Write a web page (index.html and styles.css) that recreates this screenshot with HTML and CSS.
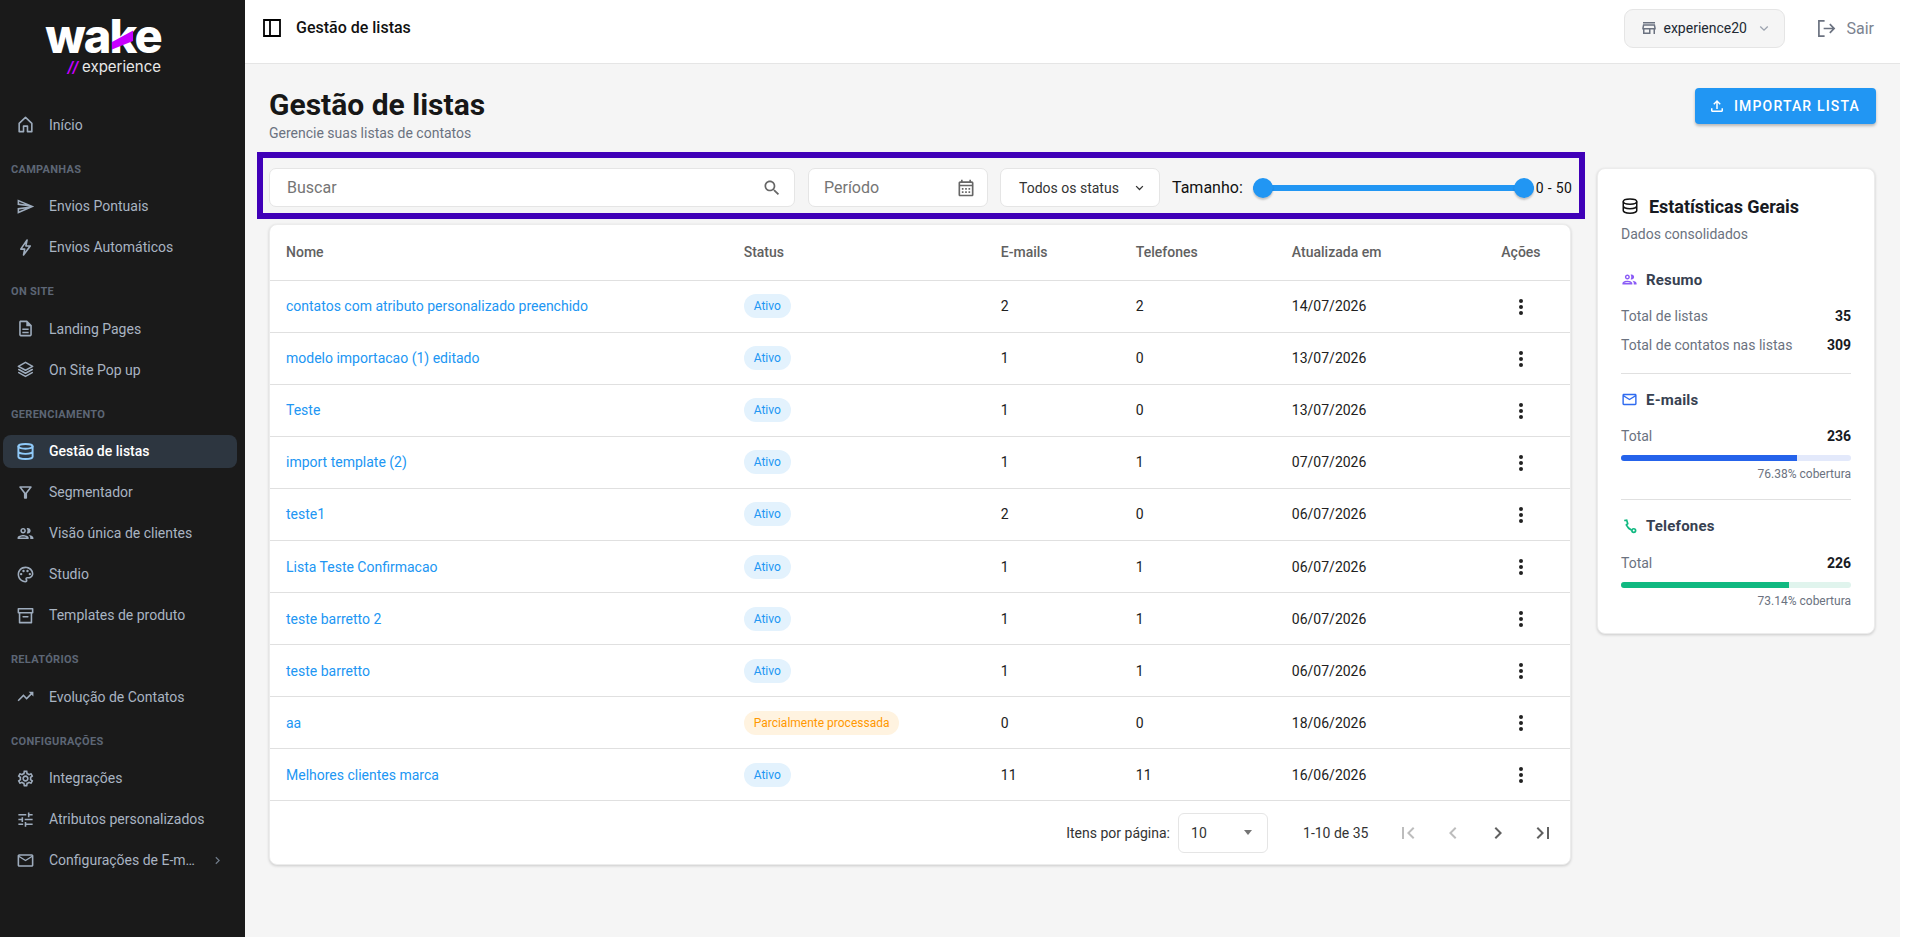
FILE: index.html
```html
<!DOCTYPE html>
<html lang="pt-BR">
<head>
<meta charset="utf-8">
<title>Gestão de listas</title>
<link rel="stylesheet" href="styles.css">
</head>
<body>
<div class="app">
  <aside class="sidebar">
    <div class="logo">
      <div class="logo-word">wake<svg class="logo-slash" viewBox="0 0 24 20"><polygon points="0,12 22,0 22,11 0,20"/></svg></div>
      <div class="logo-sub"><em>//</em> experience</div>
    </div>
    <nav class="nav">
      <a class="nav-item"><svg class="ic" viewBox="0 0 24 24"><path class="st" d="M4 21V10.5L12 3l8 7.500V21h-5.500v-7h-5v7z"/></svg><span>Início</span></a>
      <div class="nav-label">CAMPANHAS</div>
      <a class="nav-item"><svg class="ic" viewBox="0 0 24 24"><path d="M4.010 6.030l7.510 3.220-7.520-1 .01-2.220m7.500 8.720L4 17.970v-2.220l7.510-1M2.010 3L2 10l15 2-15 2 .01 7L23 12 2.010 3z"/></svg><span>Envios Pontuais</span></a>
      <a class="nav-item"><svg class="ic" viewBox="0 0 24 24"><path class="st" d="M14 2.500 6 14h5l-1.500 7.500L18 10h-5.500z"/></svg><span>Envios Automáticos</span></a>
      <div class="nav-label">ON SITE</div>
      <a class="nav-item"><svg class="ic" viewBox="0 0 24 24"><path d="M8 16h8v2H8zm0-4h8v2H8zm6-10H6c-1.100 0-2 .9-2 2v16c0 1.100.89 2 1.990 2H18c1.100 0 2-.9 2-2V8l-6-6zm4 18H6V4h7v5h5v11z"/></svg><span>Landing Pages</span></a>
      <a class="nav-item"><svg class="ic" viewBox="0 0 24 24"><path class="st" d="M12 3l9 5-9 5-9-5zM3.500 12l8.500 4.700 8.500-4.700M3.500 16l8.500 4.700 8.500-4.700"/></svg><span>On Site Pop up</span></a>
      <div class="nav-label">GERENCIAMENTO</div>
      <a class="nav-item active"><svg class="ic" viewBox="0 0 24 24"><g class="st thick"><ellipse cx="12" cy="5.500" rx="9" ry="3"/><path d="M3 5.500v13c0 1.700 4 3 9 3s9-1.300 9-3v-13M3 12c0 1.700 4 3 9 3s9-1.300 9-3"/></g></svg><span>Gestão de listas</span></a>
      <a class="nav-item"><svg class="ic" viewBox="0 0 24 24"><path d="M7 6h10l-5.010 6.300L7 6zM4.250 5.610C6.270 8.200 10 13 10 13v6c0 .55.45 1 1 1h2c.55 0 1-.45 1-1v-6s3.720-4.800 5.740-7.390C20.250 4.950 19.780 4 18.950 4H5.040C4.210 4 3.740 4.950 4.250 5.610z"/></svg><span>Segmentador</span></a>
      <a class="nav-item"><svg class="ic" viewBox="0 0 24 24"><path d="M9 13.750c-2.340 0-7 1.170-7 3.500V19h14v-1.750c0-2.330-4.660-3.500-7-3.500zM4.340 17c.84-.58 2.870-1.250 4.660-1.250s3.820.67 4.660 1.250H4.340zM9 12c1.930 0 3.500-1.570 3.500-3.500S10.930 5 9 5 5.500 6.570 5.500 8.500 7.070 12 9 12zm0-5c.83 0 1.500.67 1.500 1.500S9.830 10 9 10s-1.500-.67-1.500-1.500S8.170 7 9 7zm7.040 6.810c1.160.84 1.960 1.960 1.960 3.440V19h4v-1.750c0-2.020-3.500-3.170-5.960-3.440zM15 12c1.930 0 3.500-1.570 3.500-3.500S16.930 5 15 5c-.54 0-1.040.13-1.500.35.63.89 1 1.980 1 3.150s-.37 2.260-1 3.150c.46.22.96.35 1.500.35z"/></svg><span>Visão única de clientes</span></a>
      <a class="nav-item"><svg class="ic" viewBox="0 0 24 24"><path d="M12 22C6.490 22 2 17.510 2 12S6.490 2 12 2s10 4.040 10 9c0 3.310-2.690 6-6 6h-1.770c-.28 0-.5.22-.5.5 0 .12.05.23.13.33.41.47.64 1.060.64 1.670 0 1.380-1.120 2.500-2.500 2.500zm0-18c-4.410 0-8 3.590-8 8s3.590 8 8 8c.28 0 .5-.22.5-.5 0-.16-.08-.28-.14-.35-.41-.46-.63-1.050-.63-1.650 0-1.380 1.120-2.500 2.500-2.500H16c2.210 0 4-1.790 4-4 0-3.860-3.590-7-8-7z"/><circle cx="6.500" cy="11.500" r="1.500"/><circle cx="9.500" cy="7.500" r="1.500"/><circle cx="14.500" cy="7.500" r="1.500"/><circle cx="17.500" cy="11.500" r="1.500"/></svg><span>Studio</span></a>
      <a class="nav-item"><svg class="ic" viewBox="0 0 24 24"><path class="st" d="M3 3.500h18v5H3zM4.500 8.500V21h15V8.500M9 13.500h6"/></svg><span>Templates de produto</span></a>
      <div class="nav-label">RELATÓRIOS</div>
      <a class="nav-item"><svg class="ic" viewBox="0 0 24 24"><path d="M16 6l2.290 2.290-4.880 4.880-4-4L2 16.590 3.410 18l6-6 4 4 6.300-6.290L22 12V6z"/></svg><span>Evolução de Contatos</span></a>
      <div class="nav-label">CONFIGURAÇÕES</div>
      <a class="nav-item"><svg class="ic" viewBox="0 0 24 24"><path d="M19.430 12.980c.04-.32.07-.64.07-.98 0-.34-.03-.66-.07-.98l2.110-1.650c.19-.15.24-.42.12-.64l-2-3.460c-.09-.16-.26-.25-.44-.25-.06 0-.12.01-.17.03l-2.490 1c-.52-.4-1.080-.73-1.690-.98l-.38-2.650C14.460 2.180 14.250 2 14 2h-4c-.25 0-.46.18-.49.42l-.38 2.650c-.61.25-1.170.59-1.690.98l-2.490-1c-.06-.02-.12-.03-.18-.03-.17 0-.34.09-.43.25l-2 3.460c-.13.22-.07.49.12.64l2.110 1.650c-.04.32-.07.65-.07.98 0 .33.03.66.07.98l-2.110 1.650c-.19.15-.24.42-.12.64l2 3.460c.09.16.26.25.44.25.06 0 .12-.01.17-.03l2.490-1c.52.4 1.080.73 1.690.98l.38 2.650c.03.24.24.42.49.42h4c.25 0 .46-.18.49-.42l.38-2.650c.61-.25 1.170-.59 1.690-.98l2.490 1c.06.02.12.03.18.03.17 0 .34-.09.43-.25l2-3.460c.12-.22.07-.49-.12-.64l-2.110-1.650zm-1.980-1.710c.04.31.05.52.05.73 0 .21-.02.43-.05.73l-.14 1.130.89.7 1.080.84-.7 1.210-1.270-.51-1.040-.42-.9.68c-.43.32-.84.56-1.250.73l-1.060.43-.16 1.130-.2 1.350h-1.400l-.19-1.350-.16-1.130-1.060-.43c-.43-.18-.83-.41-1.230-.71l-.91-.7-1.060.43-1.270.51-.7-1.210 1.080-.84.89-.7-.14-1.130c-.03-.31-.05-.54-.05-.74s.02-.43.05-.73l.14-1.130-.89-.7-1.080-.84.7-1.210 1.270.51 1.040.42.9-.68c.43-.32.84-.56 1.250-.73l1.060-.43.16-1.130.2-1.350h1.390l.19 1.350.16 1.130 1.060.43c.43.18.83.41 1.230.71l.91.7 1.060-.43 1.270-.51.7 1.210-1.070.85-.89.7.14 1.130zM12 8c-2.210 0-4 1.790-4 4s1.790 4 4 4 4-1.790 4-4-1.790-4-4-4zm0 6c-1.100 0-2-.9-2-2s.9-2 2-2 2 .9 2 2-.9 2-2 2z"/></svg><span>Integrações</span></a>
      <a class="nav-item"><svg class="ic" viewBox="0 0 24 24"><path d="M3 17v2h6v-2H3zM3 5v2h10V5H3zm10 16v-2h8v-2h-8v-2h-2v6h2zM7 9v2H3v2h4v2h2V9H7zm14 4v-2H11v2h10zm-6-4h2V7h4V5h-4V3h-2v6z"/></svg><span>Atributos personalizados</span></a>
      <a class="nav-item"><svg class="ic" viewBox="0 0 24 24"><path d="M22 6c0-1.100-.9-2-2-2H4c-1.100 0-2 .9-2 2v12c0 1.100.9 2 2 2h16c1.100 0 2-.9 2-2V6zm-2 0l-8 5-8-5h16zm0 12H4V8l8 5 8-5v10z"/></svg><span class="nav-trunc">Configurações de E-m…</span><svg class="nav-chev" viewBox="0 0 24 24"><path d="M10 6 8.590 7.410 13.170 12l-4.580 4.590L10 18l6-6z"/></svg></a>
    </nav>
  </aside>
  <div class="main">
    <header class="topbar">
      <svg class="panel-ic" viewBox="0 0 18 18"><path d="M1 1h16v16H1zM7 1v16"/></svg>
      <div class="topbar-title">Gestão de listas</div>
      <div class="store">
        <svg class="store-ic" viewBox="0 0 24 24"><path d="M18.360 9l.6 3H5.040l.6-3h12.720M20 4H4v2h16V4zm0 3H4l-1 5v2h1v6h10v-6h4v6h2v-6h1v-2l-1-5zM6 18v-4h6v4H6z"/></svg>
        <span class="store-name">experience20</span>
        <svg class="store-chev" viewBox="0 0 12 8"><path d="M1.500 1.500 6 6l4.500-4.500"/></svg>
      </div>
      <div class="logout">
        <svg class="logout-ic" viewBox="0 0 20 20"><path d="M8 2H2v16h6M7 10h11M13.500 5.500 18 10l-4.500 4.500"/></svg>
        <span>Sair</span>
      </div>
    </header>
    <main class="content">
      <div class="page-head">
        <div>
          <h1 class="page-title">Gestão de listas</h1>
          <p class="page-sub">Gerencie suas listas de contatos</p>
        </div>
        <button class="import-btn"><svg viewBox="0 0 24 24"><path d="M18 15v3H6v-3H4v3c0 1.100.9 2 2 2h12c1.100 0 2-.9 2-2v-3h-2zM7 9l1.410 1.410L11 7.830V16h2V7.830l2.590 2.580L17 9l-5-5-5 5z"/></svg>IMPORTAR LISTA</button>
      </div>
      <div class="columns">
        <section class="left">
          <div class="toolbar">
            <div class="field search"><span>Buscar</span><svg viewBox="0 0 24 24"><path d="M15.500 14h-.79l-.28-.27C15.410 12.590 16 11.110 16 9.500 16 5.910 13.090 3 9.500 3S3 5.910 3 9.500 5.910 16 9.500 16c1.610 0 3.090-.59 4.230-1.570l.27.28v.79l5 4.990L20.490 19l-4.990-5zm-6 0C7.010 14 5 11.990 5 9.500S7.010 5 9.500 5 14 7.010 14 9.500 11.990 14 9.500 14z"/></svg></div>
            <div class="field period"><span>Período</span><svg viewBox="0 0 24 24"><path d="M19 4h-1V2h-2v2H8V2H6v2H5c-1.110 0-1.990.9-1.990 2L3 20c0 1.100.89 2 2 2h14c1.100 0 2-.9 2-2V6c0-1.100-.9-2-2-2zm0 16H5V10h14v10zm0-12H5V6h14v2zM9 14H7v-2h2v2zm4 0h-2v-2h2v2zm4 0h-2v-2h2v2zm-8 4H7v-2h2v2zm4 0h-2v-2h2v2zm4 0h-2v-2h2v2z"/></svg></div>
            <div class="field status-filter"><span>Todos os status</span><svg viewBox="0 0 12 8"><path d="M1.500 1.500 6 6l4.500-4.500"/></svg></div>
            <span class="size-label">Tamanho:</span>
            <div class="slider"><i class="thumb"></i><i class="thumb"></i></div>
            <span class="size-value">0 - 50</span>
          </div>
          <div class="table-card">
            <table class="table">
              <colgroup><col class="c-name"><col class="c-status"><col class="c-mail"><col class="c-phone"><col class="c-date"><col class="c-act"></colgroup>
              <thead><tr><th>Nome</th><th>Status</th><th>E-mails</th><th>Telefones</th><th>Atualizada em</th><th class="act">Ações</th></tr></thead>
              <tbody>
                <tr><td><a>contatos com atributo personalizado preenchido</a></td><td><span class="chip">Ativo</span></td><td>2</td><td>2</td><td>14/07/2026</td><td class="act"><svg class="kebab" viewBox="0 0 24 24"><circle cx="12" cy="6" r="2"/><circle cx="12" cy="12" r="2"/><circle cx="12" cy="18" r="2"/></svg></td></tr>
                <tr><td><a>modelo importacao (1) editado</a></td><td><span class="chip">Ativo</span></td><td>1</td><td>0</td><td>13/07/2026</td><td class="act"><svg class="kebab" viewBox="0 0 24 24"><circle cx="12" cy="6" r="2"/><circle cx="12" cy="12" r="2"/><circle cx="12" cy="18" r="2"/></svg></td></tr>
                <tr><td><a>Teste</a></td><td><span class="chip">Ativo</span></td><td>1</td><td>0</td><td>13/07/2026</td><td class="act"><svg class="kebab" viewBox="0 0 24 24"><circle cx="12" cy="6" r="2"/><circle cx="12" cy="12" r="2"/><circle cx="12" cy="18" r="2"/></svg></td></tr>
                <tr><td><a>import template (2)</a></td><td><span class="chip">Ativo</span></td><td>1</td><td>1</td><td>07/07/2026</td><td class="act"><svg class="kebab" viewBox="0 0 24 24"><circle cx="12" cy="6" r="2"/><circle cx="12" cy="12" r="2"/><circle cx="12" cy="18" r="2"/></svg></td></tr>
                <tr><td><a>teste1</a></td><td><span class="chip">Ativo</span></td><td>2</td><td>0</td><td>06/07/2026</td><td class="act"><svg class="kebab" viewBox="0 0 24 24"><circle cx="12" cy="6" r="2"/><circle cx="12" cy="12" r="2"/><circle cx="12" cy="18" r="2"/></svg></td></tr>
                <tr><td><a>Lista Teste Confirmacao</a></td><td><span class="chip">Ativo</span></td><td>1</td><td>1</td><td>06/07/2026</td><td class="act"><svg class="kebab" viewBox="0 0 24 24"><circle cx="12" cy="6" r="2"/><circle cx="12" cy="12" r="2"/><circle cx="12" cy="18" r="2"/></svg></td></tr>
                <tr><td><a>teste barretto 2</a></td><td><span class="chip">Ativo</span></td><td>1</td><td>1</td><td>06/07/2026</td><td class="act"><svg class="kebab" viewBox="0 0 24 24"><circle cx="12" cy="6" r="2"/><circle cx="12" cy="12" r="2"/><circle cx="12" cy="18" r="2"/></svg></td></tr>
                <tr><td><a>teste barretto</a></td><td><span class="chip">Ativo</span></td><td>1</td><td>1</td><td>06/07/2026</td><td class="act"><svg class="kebab" viewBox="0 0 24 24"><circle cx="12" cy="6" r="2"/><circle cx="12" cy="12" r="2"/><circle cx="12" cy="18" r="2"/></svg></td></tr>
                <tr><td><a>aa</a></td><td><span class="chip partial">Parcialmente processada</span></td><td>0</td><td>0</td><td>18/06/2026</td><td class="act"><svg class="kebab" viewBox="0 0 24 24"><circle cx="12" cy="6" r="2"/><circle cx="12" cy="12" r="2"/><circle cx="12" cy="18" r="2"/></svg></td></tr>
                <tr><td><a>Melhores clientes marca</a></td><td><span class="chip">Ativo</span></td><td>11</td><td>11</td><td>16/06/2026</td><td class="act"><svg class="kebab" viewBox="0 0 24 24"><circle cx="12" cy="6" r="2"/><circle cx="12" cy="12" r="2"/><circle cx="12" cy="18" r="2"/></svg></td></tr>
              </tbody>
            </table>
            <div class="pager">
              <span>Itens por página:</span>
              <div class="pager-select"><span>10</span><i class="caret"></i></div>
              <span class="pager-range">1-10 de 35</span>
              <svg class="pg off" viewBox="0 0 24 24"><path d="M18.410 16.590 13.820 12l4.590-4.590L17 6l-6 6 6 6zM6 6h2v12H6z"/></svg>
              <svg class="pg off" viewBox="0 0 24 24"><path d="M15.410 7.410 14 6l-6 6 6 6 1.410-1.410L10.830 12z"/></svg>
              <svg class="pg" viewBox="0 0 24 24"><path d="M10 6 8.590 7.410 13.170 12l-4.580 4.590L10 18l6-6z"/></svg>
              <svg class="pg" viewBox="0 0 24 24"><path d="M5.590 7.410 10.180 12l-4.590 4.590L7 18l6-6-6-6zM16 6h2v12h-2z"/></svg>
            </div>
          </div>
        </section>
        <aside class="stats">
          <div class="stats-head">
            <svg class="stats-ic" viewBox="0 0 24 24"><ellipse cx="12" cy="6" rx="9" ry="3.500"/><path d="M3 6v12c0 1.900 4 3.500 9 3.500s9-1.600 9-3.500V6M3 12c0 1.900 4 3.500 9 3.500s9-1.600 9-3.500"/></svg>
            <h2>Estatísticas Gerais</h2>
          </div>
          <p class="stats-sub">Dados consolidados</p>
          <div class="stat-block first">
            <div class="stat-title"><svg class="violet" viewBox="0 0 24 24"><path d="M9 13.750c-2.340 0-7 1.170-7 3.500V19h14v-1.750c0-2.330-4.660-3.500-7-3.500zM4.340 17c.84-.58 2.870-1.250 4.660-1.250s3.820.67 4.660 1.250H4.340zM9 12c1.930 0 3.500-1.570 3.500-3.500S10.930 5 9 5 5.500 6.570 5.500 8.500 7.070 12 9 12zm0-5c.83 0 1.500.67 1.500 1.500S9.830 10 9 10s-1.500-.67-1.500-1.500S8.170 7 9 7zm7.040 6.810c1.160.84 1.960 1.960 1.960 3.440V19h4v-1.750c0-2.020-3.500-3.170-5.960-3.440zM15 12c1.930 0 3.500-1.570 3.500-3.500S16.930 5 15 5c-.54 0-1.040.13-1.500.35.63.89 1 1.980 1 3.150s-.37 2.260-1 3.150c.46.22.96.35 1.500.35z"/></svg>Resumo</div>
            <div class="stat-row"><span>Total de listas</span><b>35</b></div>
            <div class="stat-row"><span>Total de contatos nas listas</span><b>309</b></div>
          </div>
          <div class="stat-block">
            <div class="stat-title"><svg class="blue" viewBox="0 0 24 24"><path d="M22 6c0-1.100-.9-2-2-2H4c-1.100 0-2 .9-2 2v12c0 1.100.9 2 2 2h16c1.100 0 2-.9 2-2V6zm-2 0l-8 5-8-5h16zm0 12H4V8l8 5 8-5v10z"/></svg>E-mails</div>
            <div class="stat-row"><span>Total</span><b>236</b></div>
            <div class="bar blue-bar"><i style="width:76.38%"></i></div>
            <div class="bar-note">76.38% cobertura</div>
          </div>
          <div class="stat-block">
            <div class="stat-title"><svg class="green" viewBox="0 0 24 24"><path d="M4.500 3.500 8 3l1.500 5-2 1.800c1.500 3.400 4 6 7.500 7.400"/><circle cx="18" cy="17.800" r="2.600"/></svg>Telefones</div>
            <div class="stat-row"><span>Total</span><b>226</b></div>
            <div class="bar green-bar"><i style="width:73.14%"></i></div>
            <div class="bar-note">73.14% cobertura</div>
          </div>
        </aside>
      </div>
    </main>
  </div>
</div>
</body>
</html>
```
FILE: styles.css
```css
* { box-sizing: border-box; }
html, body { height: 100%; }
body { margin: 0; background: #fff; font-family: Roboto, "Liberation Sans", sans-serif; color: #212121; overflow: hidden; }
.app { display: flex; width: 1900px; height: 937px; }

.sidebar { flex: 0 0 245px; background: #1a1a1a; display: flex; flex-direction: column; }
.logo { height: 89px; display: flex; flex-direction: column; align-items: flex-end; padding: 14px 84px 0 0; }
.logo-word { position: relative; font-family: Inter, sans-serif; font-weight: 800; font-size: 47px; line-height: 44px; letter-spacing: -1.8px; color: #fff; }
.logo-slash { position: absolute; left: 67px; top: 16px; width: 23px; height: 20px; fill: #c800ff; }
.logo-sub { font-family: Inter, sans-serif; font-size: 15px; line-height: 18px; color: #e8e8e8; }
.logo-sub em { color: #c800ff; font-weight: 600; letter-spacing: -.5px; }
.nav { display: flex; flex-direction: column; padding: 0 8px 0 3px; margin-top: 19px; }
.nav-item { display: flex; align-items: center; height: 33px; margin-bottom: 8px; padding: 0 8px 0 14px; border-radius: 8px; font-size: 14px; color: #a9b4c2; }
.nav-item .ic { flex: none; width: 19px; height: 19px; margin-right: 14px; margin-left: -1px; fill: #9eacbd; }
.nav-item span { white-space: nowrap; }
.nav-item.active { background: #2d3640; color: #fff; font-weight: 500; }
.nav-item.active .ic { fill: none; }
.st { fill: none; stroke: #9eacbd; stroke-width: 2; stroke-linejoin: round; stroke-linecap: round; }
.st.thick { stroke: #90caf9; stroke-width: 2.4; }
.nav-label { font-size: 11px; font-weight: 700; letter-spacing: .3px; line-height: 14px; color: #5d6675; padding-left: 8px; margin: 13.500px 0 13px; }
.nav-trunc { width: 147px; }
.nav-chev { width: 15px; height: 15px; margin-left: 14px; fill: #6f7a88; }

.main { flex: 1; min-width: 0; background: #f5f5f5; display: flex; flex-direction: column; }
.topbar { height: 64px; background: #fff; border-bottom: 1px solid #e5e5e5; display: flex; align-items: center; padding: 0 26px 7px 18px; }
.panel-ic { width: 18px; height: 18px; fill: none; stroke: #000; stroke-width: 1.8; margin-right: 15px; }
.topbar-title { flex: 1; font-size: 16px; font-weight: 500; color: #111; margin-top: -1px; }
.store { display: flex; align-items: center; height: 39px; width: 161px; background: #f5f5f5; border: 1px solid #e5e5e5; border-radius: 9px; padding: 0 15px; margin-right: 32px; font-size: 14px; color: #212933; }
.store-ic { width: 18px; height: 18px; fill: #6b7280; margin-right: 5px; }
.store-name { flex: 1; }
.store-chev { width: 10px; height: 7px; fill: none; stroke: #9ca3af; stroke-width: 1.6; }
.logout { display: flex; align-items: center; font-size: 16px; color: #7b8390; }
.logout-ic { width: 19px; height: 19px; fill: none; stroke: #6b7280; stroke-width: 1.8; margin-right: 10px; }

.content { flex: 1; padding: 24px 24px 0; }
.page-head { display: flex; justify-content: space-between; height: 64px; }
.page-title { margin: -1px 0 0; font-size: 30px; line-height: 36px; font-weight: 700; color: #171717; }
.page-sub { margin: 1px 0 0; font-size: 14px; line-height: 18px; color: #6b7280; }
.import-btn { display: flex; align-items: center; height: 36px; width: 181px; padding: 0 0 0 13px; border: 0; border-radius: 4px; background: #2196f3; color: #fff; font: 500 14px Roboto, sans-serif; letter-spacing: 1.15px; box-shadow: 0 2px 3px rgba(0,0,0,.25); }
.import-btn svg { width: 18px; height: 18px; fill: #fff; margin-right: 8px; }

.columns { display: flex; gap: 12px; margin-left: -12px; align-items: flex-start; }
.left { width: 1328px; flex: none; }
.toolbar { display: flex; align-items: center; height: 67px; border: 6px solid #4000b8; padding: 4px 0 0 6px; }
.field { flex: none; display: flex; align-items: center; justify-content: space-between; height: 39px; background: #fff; border: 1px solid #e5e5e5; border-radius: 7px; font-size: 16px; color: #757575; }
.field svg { flex: none; }
.search { width: 526px; margin-right: 13px; padding: 0 12px 0 17px; }
.search svg { width: 20px; height: 20px; fill: #666; }
.period { width: 180px; margin-right: 12px; padding: 0 11px 0 15px; }
.period svg { width: 20px; height: 20px; fill: #666; }
.status-filter { width: 160px; margin-right: 12px; padding: 0 15px 0 18px; font-size: 14px; color: #333; }
.status-filter svg { width: 9px; height: 6px; fill: none; stroke: #333; stroke-width: 1.7; }
.size-label { font-size: 16px; color: #111; margin-right: 10px; }
.slider { flex: none; width: 281px; height: 6px; background: #2196f3; border-radius: 3px; margin-right: 2px; display: flex; justify-content: space-between; align-items: center; }
.thumb { display: block; width: 20px; height: 20px; border-radius: 50%; background: #2196f3; box-shadow: 0 2px 2px rgba(0,0,0,.2); }
.size-value { font-size: 14px; letter-spacing: .35px; color: #111; white-space: nowrap; }

.table-card { margin: 5px 14px 0 12px; background: #fff; border: 1px solid #ececec; border-radius: 8px; box-shadow: 0 1px 3px rgba(0,0,0,.18); overflow: hidden; }
.table { width: 100%; border-collapse: collapse; table-layout: fixed; font-size: 14px; }
.c-name { width: 457.5px; } .c-status { width: 257px; } .c-mail { width: 135px; } .c-phone { width: 156px; } .c-date { width: 196px; } .c-act { width: 98px; }
.table th { height: 55px; padding: 0 0 0 16px; text-align: left; font-weight: 500; font-size: 14px; color: #616161; border-bottom: 1px solid #e0e0e0; }
.table td { height: 52.1px; padding: 0 0 0 16px; color: #212121; border-bottom: 1px solid #e0e0e0; }
.table .act { padding: 0; text-align: center; }
.table a { color: #2196f3; }
.chip { display: inline-block; height: 24px; line-height: 24px; padding: 0 10px; border-radius: 12px; background: #e3f2fd; color: #2196f3; font-size: 12px; }
.chip.partial { background: #fff3e0; color: #ff9800; }
.kebab { display: block; width: 24px; height: 24px; margin: 1px auto 0; fill: #212121; }
.pager { display: flex; align-items: center; justify-content: flex-end; height: 63px; padding-right: 15px; font-size: 14px; color: #333; }
.pager-select { display: flex; align-items: center; justify-content: space-between; width: 90px; height: 40px; margin-left: 8px; padding: 0 15px 0 12px; border: 1px solid #e5e5e5; border-radius: 6px; }
.caret { width: 0; height: 0; border: 4.5px solid transparent; border-top: 5px solid #757575; border-bottom: 0; }
.pager-range { margin: 0 27.500px 0 35px; }
.pg { width: 24px; height: 24px; margin-left: 21px; fill: #616161; }
.pg:first-of-type { margin-left: 0; }
.pg.off { fill: #bdbdbd; }

.stats { width: 278px; flex: none; margin-top: 16px; background: #fff; border: 1px solid #ececec; border-radius: 8px; box-shadow: 0 1px 3px rgba(0,0,0,.18); padding: 24px 23px; }
.stats-head { display: flex; align-items: center; height: 26px; }
.stats-ic { width: 18px; height: 18px; fill: none; stroke: #111; stroke-width: 2; margin-right: 10px; }
.stats-head h2 { margin: 0; font-size: 18px; font-weight: 700; color: #171a22; white-space: nowrap; letter-spacing: -.05px; }
.stats-sub { margin: 3px 0 0; font-size: 14px; line-height: 24px; color: #6b7280; }
.stat-block { border-top: 1px solid #e0e0e0; padding-top: 16px; padding-bottom: 17px; }
.stat-block.first { border-top: 0; padding-top: 23.500px; padding-bottom: 13px; }
.stat-block:last-child { padding-bottom: 0; }
.stat-title { display: flex; align-items: center; height: 20px; font-size: 15px; font-weight: 700; color: #374151; letter-spacing: .2px; margin-bottom: 12px; }
.stat-title svg { width: 17px; height: 17px; margin-right: 8px; }
.violet { fill: #8b5cf6; } .blue { fill: #2f6bf0; } .green { fill: none; stroke: #10b981; stroke-width: 2.4; }
.stat-row { display: flex; justify-content: space-between; align-items: center; height: 29px; font-size: 14px; color: #6b7280; }
.stat-row b { color: #171a22; font-weight: 700; }
.bar { height: 6px; border-radius: 3px; overflow: hidden; margin-top: 4.500px; }
.bar i { display: block; height: 100%; }
.blue-bar { background: #e3e9fb; } .blue-bar i { background: #2563eb; }
.green-bar { background: #e0f4ed; } .green-bar i { background: #10b981; }
.bar-note { font-size: 12px; line-height: 16px; color: #6b7280; text-align: right; margin-top: 5px; }
```
